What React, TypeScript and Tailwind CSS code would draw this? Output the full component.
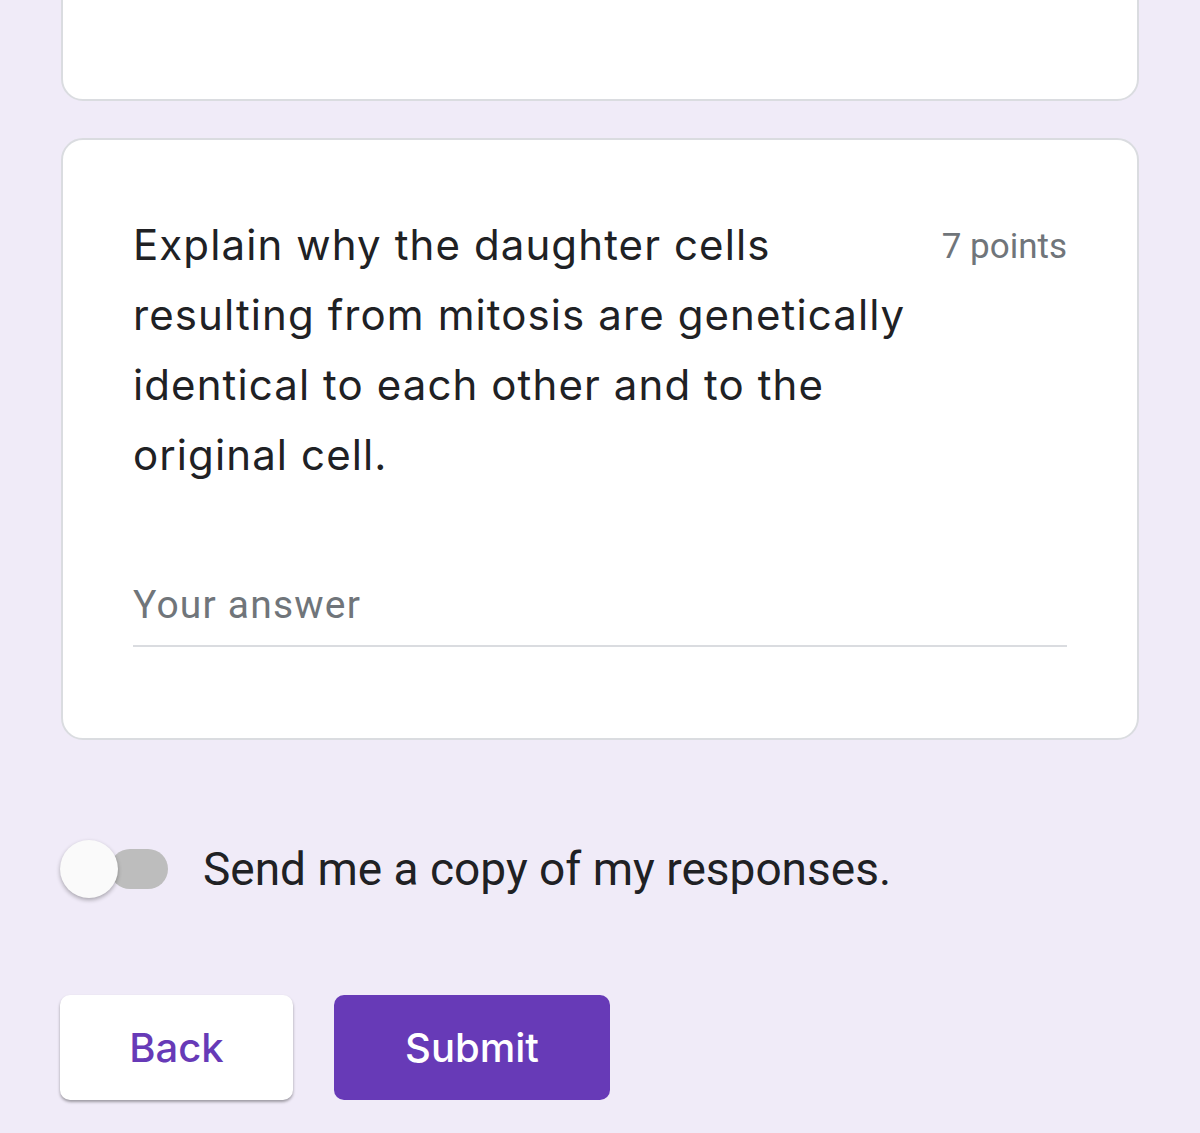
export default function App() {
  return (
    <div className="w-[1200px] h-[1133px] bg-[#f0ebf8] overflow-hidden relative" style={{ fontFamily: 'Roboto, "Liberation Sans", sans-serif' }}>
      <div className="px-[61px] flex flex-col">
        <div className="mt-[-100px] h-[201px] bg-white border-2 border-[#dadce0] rounded-[22px]" />
        <div className="mt-[37px] h-[602px] bg-white border-2 border-[#dadce0] rounded-[22px] pl-[70px] pr-[70px] pt-[70px]">
          <div className="flex justify-between items-start">
            <div className="w-[790px] text-[42px] leading-[70px] text-[#202124] tracking-[1.1px]" style={{ fontFamily: 'Inter, "Open Sans", sans-serif' }}>
              Explain why the daughter cells resulting from mitosis are genetically identical to each other and to the original cell.
            </div>
            <div className="text-[35px] text-[#70757a] mt-[17px] leading-[40px]">7 points</div>
          </div>
          <div className="mt-[93px] text-[39px] text-[#70757a] leading-[44px] tracking-[1.2px]">Your answer</div>
          <div className="mt-[18px] h-[2px] bg-[#dadce0]" />
        </div>
      </div>
      <div className="flex items-center pl-[60px] mt-[99px] h-[60px]">
        <div className="relative w-[108px] h-[60px] flex items-center">
          <div className="absolute left-[50px] w-[58px] h-[40px] rounded-full bg-[#bdbdbd]" />
          <div className="absolute left-0 w-[58px] h-[58px] rounded-full bg-[#fafafa] shadow-[0_2px_4px_rgba(0,0,0,0.3)]" />
        </div>
        <div className="ml-[35px] text-[46px] text-[#202124] leading-[60px]">Send me a copy of my responses.</div>
      </div>
      <div className="flex pl-[60px] mt-[96px] gap-[41px]">
        <div className="w-[233px] h-[105px] bg-white rounded-[10px] shadow-[0_2px_3px_rgba(0,0,0,0.35)] flex items-center justify-center text-[40px] text-[#673ab7] font-medium" style={{ fontFamily: 'Inter, "Open Sans", sans-serif' }}>Back</div>
        <div className="w-[276px] h-[105px] bg-[#673ab7] rounded-[10px] flex items-center justify-center text-[40px] text-white font-medium" style={{ fontFamily: 'Inter, "Open Sans", sans-serif' }}>Submit</div>
      </div>
    </div>
  );
}
